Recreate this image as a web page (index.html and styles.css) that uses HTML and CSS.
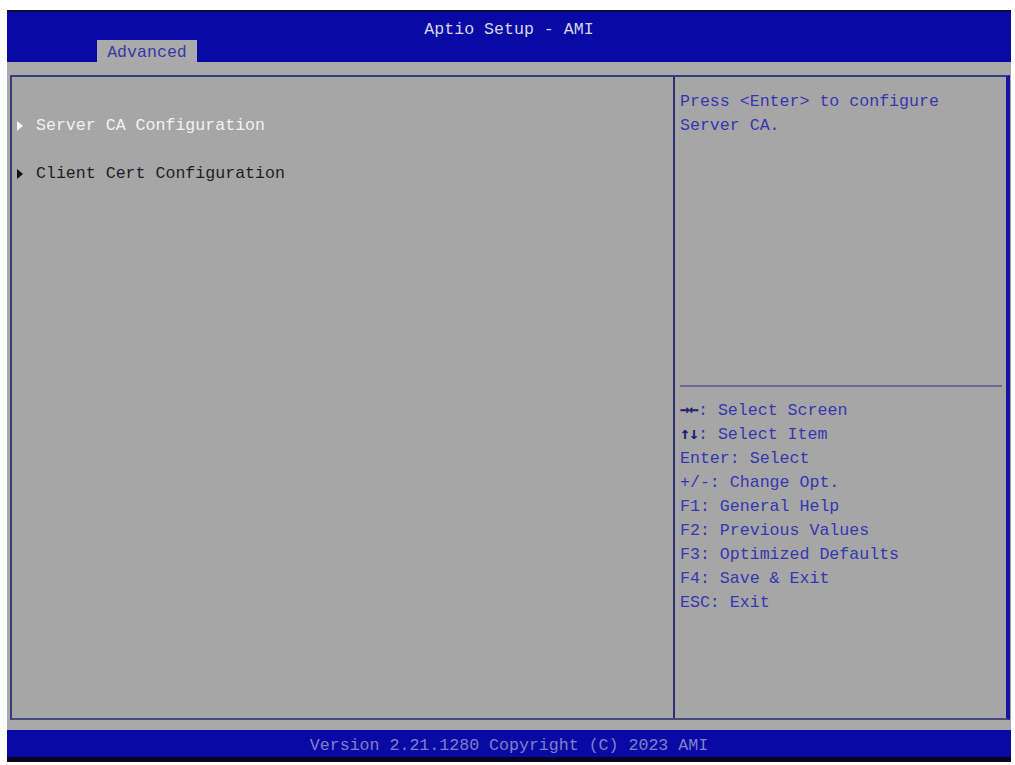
FILE: index.html
```html
<!DOCTYPE html>
<html lang="en">
<head>
  <meta charset="UTF-8">
  <meta name="viewport" content="width=device-width, initial-scale=1.0">
  <title>Aptio Setup - AMI</title>
  <link rel="stylesheet" href="styles.css">
</head>
<body>
  <div class="screen">
    <header class="top">
      <div class="title">Aptio Setup - AMI</div>
      <div class="tab">Advanced</div>
    </header>

    <main class="area">
      <div class="panel">
        <section class="menu">
          <div class="item selected">Server CA Configuration</div>
          <div class="item">Client Cert Configuration</div>
        </section>

        <aside class="side">
          <div class="help">
            <p>Press &lt;Enter&gt; to configure</p>
            <p>Server CA.</p>
          </div>
          <div class="sep"></div>
          <div class="keys">
            <p><span class="arrows">&rarr;&larr;</span>: Select Screen</p>
            <p><span class="arrows">&uarr;&darr;</span>: Select Item</p>
            <p>Enter: Select</p>
            <p>+/-: Change Opt.</p>
            <p>F1: General Help</p>
            <p>F2: Previous Values</p>
            <p>F3: Optimized Defaults</p>
            <p>F4: Save &amp; Exit</p>
            <p>ESC: Exit</p>
          </div>
        </aside>
      </div>
    </main>

    <footer class="bottom">Version 2.21.1280 Copyright (C) 2023 AMI</footer>
  </div>
</body>
</html>
```

FILE: styles.css
```css
body {
  margin: 0;
  background-color: #ffffff;
  font-family: "Liberation Mono", "DejaVu Sans Mono", monospace;
  font-size: 16.6px;
  line-height: 24px;
}

p {
  margin: 0;
}

.screen {
  width: 1004px;
  margin: 10px 0 0 7px;
  display: flex;
  flex-direction: column;
}

/* blue title bar with the tab */
.top {
  height: 44px;
  padding-top: 6px;
  border-top: 2px solid #0a0a3a;
  background-color: #0909a6;
  display: flex;
  flex-direction: column;
}

.title {
  height: 22px;
  line-height: 24px;
  text-align: center;
  color: #d6d6e6;
}

.tab {
  width: 100px;
  height: 22px;
  margin-left: 90px;
  line-height: 26px;
  text-align: center;
  background-color: #aaaaaa;
  color: #3838a4;
}

.area {
  height: 645px;
  padding: 13px 1px 10px 3px;
  background-color: #a9a9a9;
}

.panel {
  height: 641px;
  display: grid;
  grid-template-columns: 663px 1fr;
  border: 2px solid #3a3a7e;
  border-right: 4px solid #1414a0;
  border-bottom-color: #4a4a78;
  background-color: #a6a6a6;
}

.menu {
  padding: 37px 0 0 4px;
  border-right: 2px solid #2e2e72;
  display: flex;
  flex-direction: column;
  gap: 24px;
}

.item {
  display: flex;
  align-items: center;
  color: #1e1e22;
}

.item::before {
  content: "";
  width: 0;
  height: 0;
  margin: 0 13px 0 1px;
  border-left: 6px solid #111111;
  border-top: 5px solid transparent;
  border-bottom: 5px solid transparent;
}

.item.selected {
  color: #f2f2f2;
}

.item.selected::before {
  border-left-color: #f6f6f6;
}

.side {
  display: flex;
  flex-direction: column;
  color: #3636b2;
}

.help {
  height: 295px;
  padding: 13px 0 0 5px;
}

.sep {
  height: 2px;
  margin: 0 4px 0 5px;
  background-color: #6a6a8c;
}

.keys {
  padding: 12px 0 0 5px;
}

.keys p {
  height: 24px;
  overflow: hidden;
}

.arrows {
  font-family: "DejaVu Sans Mono", monospace;
  font-weight: bold;
  letter-spacing: -1px;
  line-height: 1;
  color: #20206a;
}

.bottom {
  height: 27px;
  line-height: 31px;
  text-align: center;
  background-color: #0909a6;
  border-bottom: 5px solid #06061e;
  color: #8080c8;
}
```
